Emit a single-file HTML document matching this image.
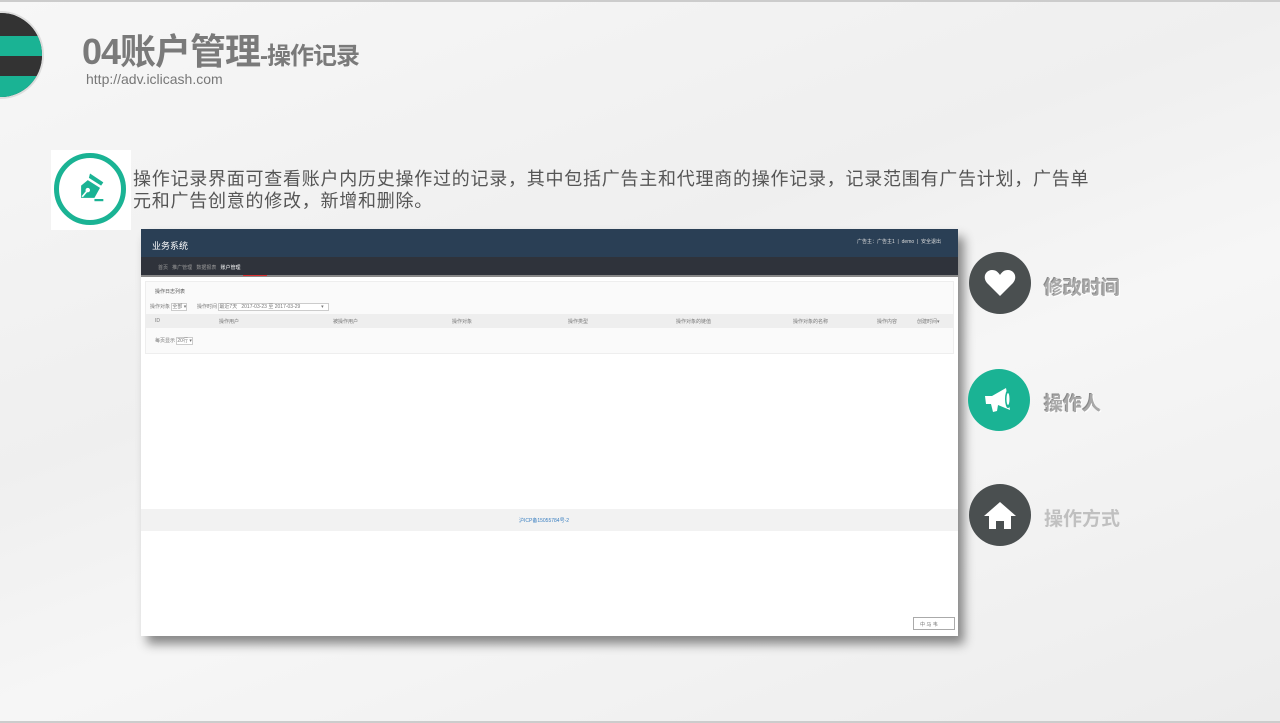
<!DOCTYPE html>
<html><head><meta charset="utf-8"><style>
*{margin:0;padding:0;box-sizing:border-box}
body{width:1280px;height:723px;overflow:hidden;position:relative;font-family:"Liberation Sans","Noto Sans CJK SC",sans-serif;background:linear-gradient(160deg,#f7f7f7 0%,#efefef 40%,#f6f6f6 60%,#ececec 100%)}
.abs{position:absolute}
.sm{font-size:5px;color:#777;position:absolute;white-space:nowrap}
.circ{position:absolute;width:62px;height:62px;border-radius:50%;display:flex;align-items:center;justify-content:center}
.lbl{position:absolute;font-size:19px;font-weight:bold;color:#a8a8a8;text-shadow:1px 1px 0 #fff,-1px -1px 0 #888}
</style></head><body>
<div class="abs" style="left:0;top:0;width:1280px;height:2px;background:#ccc"></div>
<div class="abs" style="left:0;top:721px;width:1280px;height:2px;background:#ccc"></div>
<div class="abs" style="left:-42px;top:11px;width:86px;height:88px;border-radius:50%;overflow:hidden;border:2px solid #ddd;background:#333">
 <div style="height:23px;background:#333"></div>
 <div style="height:20px;background:#1ab394"></div>
 <div style="height:20px;background:#333"></div>
 <div style="height:25px;background:#1ab394"></div>
</div>
<div class="abs" style="left:82px;top:23px;font-size:36px;font-weight:bold;color:#7a7a7a;letter-spacing:-1px;white-space:nowrap">04账户管理<span style="font-size:24px">-操作记录</span></div>
<div class="abs" style="left:86px;top:71px;font-size:14px;color:#777">http://adv.iclicash.com</div>
<div class="abs" style="left:51px;top:150px;width:80px;height:80px;background:#fff"></div>
<div class="abs" style="left:54px;top:153px;width:72px;height:72px;border-radius:50%;border:5px solid #1ab394;display:flex;align-items:center;justify-content:center">
<svg width="40" height="40" viewBox="0 0 36 36"><path d="M18 4 L30 12 L28 15 L17 8 Z M16 10 L27 17 L22 26 L10 26 L10 15 Z" fill="#1ab394"/><circle cx="16" cy="19" r="2" fill="#fff"/><path d="M11 25 L16 19" stroke="#fff" stroke-width="1.5"/><path d="M22 28 L30 28" stroke="#1ab394" stroke-width="2"/></svg></div>
<div class="abs" style="left:133px;top:168px;width:1000px;font-size:18px;letter-spacing:0.75px;line-height:22px;color:#555;white-space:nowrap">操作记录界面可查看账户内历史操作过的记录，其中包括广告主和代理商的操作记录，记录范围有广告计划，广告单<br>元和广告创意的修改，新增和删除。</div>
<div class="abs" style="left:141px;top:229px;width:817px;height:407px;background:#fff;box-shadow:6px 8px 10px rgba(0,0,0,.45)">
 <div style="height:28px;background:#2a3f55;position:relative">
  <div style="position:absolute;left:11px;top:10px;font-size:9px;color:#fff">业务系统</div>
  <div class="sm" style="left:716px;top:9px;color:#ddd">广告主：广告主1 &nbsp;| &nbsp;demo &nbsp;| &nbsp;安全退出</div>
 </div>
 <div style="height:20px;background:#2f333b;position:relative;border-bottom:2px solid #888">
  <div class="sm" style="left:17px;top:7px;color:#999">首页 &nbsp; 推广管理 &nbsp; 数据报表 &nbsp; <span style="color:#fff">账户管理</span></div>
  <div style="position:absolute;left:102px;top:18px;width:24px;height:1px;background:#d33"></div>
 </div>
 <div style="position:absolute;left:4px;top:52px;width:809px;height:73px;border:1px solid #eee;background:#fafafa">
  <div class="sm" style="left:9px;top:6px;color:#555">操作日志列表</div>
  <div class="sm" style="left:4px;top:21px">操作对象 <span style="border:1px solid #ccc;background:#fff">全部 ▾</span> &nbsp;&nbsp;&nbsp;&nbsp;&nbsp; 操作时间 <span style="border:1px solid #ccc;background:#fff;padding-right:4px">最近7天 &nbsp; 2017-03-23 至 2017-03-29 &nbsp;&nbsp;&nbsp;&nbsp;&nbsp;&nbsp;&nbsp;&nbsp;&nbsp;&nbsp;&nbsp;&nbsp;&nbsp; ▾</span></div>
  <div style="position:absolute;left:0;top:32px;width:807px;height:14px;background:#eee"></div>
  <div class="sm" style="left:9px;top:36px">ID</div><div class="sm" style="left:73px;top:36px">操作用户</div><div class="sm" style="left:187px;top:36px">被操作用户</div><div class="sm" style="left:306px;top:36px">操作对象</div><div class="sm" style="left:422px;top:36px">操作类型</div><div class="sm" style="left:530px;top:36px">操作对象的链值</div><div class="sm" style="left:647px;top:36px">操作对象的名称</div><div class="sm" style="left:731px;top:36px">操作内容</div><div class="sm" style="left:771px;top:36px">创建时间▾</div>
  <div class="sm" style="left:9px;top:55px">每页显示 <span style="border:1px solid #ccc;background:#fff">20行 ▾</span></div>
 </div>
 <div style="position:absolute;left:0;top:280px;width:817px;height:22px;background:#f2f2f2"><div class="sm" style="left:378px;top:8px;color:#3a7fc1">沪ICP备15055784号-2</div></div>
 <div style="position:absolute;left:772px;top:388px;width:42px;height:13px;border:1px solid #aaa"><div class="sm" style="left:6px;top:3px">中 马 韦</div></div>
</div>
<div class="circ" style="left:969px;top:252px;background:#4a4f50"><svg width="32" height="28" viewBox="0 0 32 28"><path d="M16 27 L3 14 C-2 8 2 1 8 1 C12 1 14 3 16 6 C18 3 20 1 24 1 C30 1 34 8 29 14 Z" fill="#fff"/></svg></div>
<div class="lbl" style="left:1044px;top:273px">修改时间</div>
<div class="circ" style="left:968px;top:369px;background:#1ab394"><svg width="34" height="30" viewBox="0 0 34 30"><path d="M3 11 L10 11 L24 3 L28 25 L16 20 L15 26 L11 27 L9 19 L4 19 Z" fill="#fff"/><ellipse cx="26" cy="14" rx="3" ry="9" fill="#1ab394"/><ellipse cx="26" cy="14" rx="1.5" ry="6" fill="#fff"/></svg></div>
<div class="lbl" style="left:1044px;top:389px">操作人</div>
<div class="circ" style="left:969px;top:484px;background:#4a4f50"><svg width="34" height="30" viewBox="0 0 34 30"><path d="M17 2 L33 16 L28 16 L28 29 L21 29 L21 21 L13 21 L13 29 L6 29 L6 16 L1 16 Z" fill="#fff"/></svg></div>
<div class="lbl" style="left:1044px;top:504px;color:#c0c0c0;text-shadow:none">操作方式</div>
</body></html>
